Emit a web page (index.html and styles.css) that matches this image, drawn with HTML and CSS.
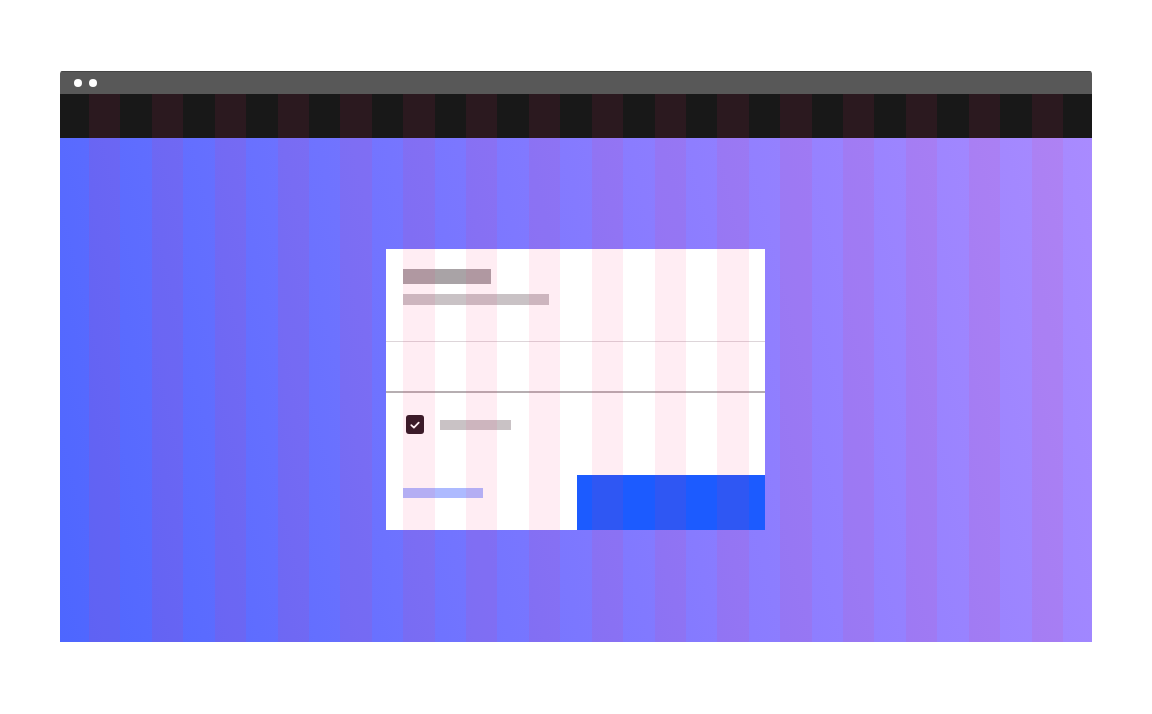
FILE: index.html
```html
<!DOCTYPE html>
<html lang="en">
<head>
<meta charset="utf-8">
<title>Layout grid</title>
<link rel="stylesheet" href="styles.css">
</head>
<body>
<div class="window">
  <div class="titlebar">
    <span class="dot"></span>
    <span class="dot"></span>
  </div>
  <div class="header"></div>
  <div class="content">
    <div class="card">
      <div class="card-head">
        <div class="bar title-bar"></div>
        <div class="bar sub-bar"></div>
      </div>
      <div class="divider-light"></div>
      <div class="field"></div>
      <div class="divider-dark"></div>
      <div class="check-row">
        <span class="checkbox">
          <svg width="12" height="12" viewBox="0 0 12 12"><path d="M2.3 6.2 L4.9 8.6 L9.7 3.6" fill="none" stroke="#fff" stroke-width="1.8" stroke-linecap="round" stroke-linejoin="round"/></svg>
        </span>
        <div class="bar label-bar"></div>
      </div>
      <div class="footer">
        <div class="footer-left"><div class="bar link-bar"></div></div>
        <div class="button"></div>
      </div>
    </div>
  </div>
  <div class="overlay">
    <span></span><span></span><span></span><span></span>
    <span></span><span></span><span></span><span></span>
    <span></span><span></span><span></span><span></span>
    <span></span><span></span><span></span><span></span>
  </div>
</div>
</body>
</html>
```

FILE: styles.css
```css
html, body {
  margin: 0;
  padding: 0;
  background: #ffffff;
  font-family: "Liberation Sans", Arial, sans-serif;
}
body {
  padding-top: 71px;
  padding-left: 60px;
  height: 714px;
  box-sizing: border-box;
}
.window {
  position: relative;
  width: 1032px;
  height: 571px;
  display: flex;
  flex-direction: column;
  border-radius: 3px 3px 0 0;
  overflow: hidden;
}
.titlebar {
  height: 23px;
  background: #585858;
  display: flex;
  align-items: center;
  gap: 7px;
  padding-left: 14px;
  box-shadow: inset 0 1px 0 #454545;
  flex: none;
}
.dot {
  width: 8px;
  height: 8px;
  border-radius: 50%;
  background: #ffffff;
}
.header {
  height: 44px;
  background: #181818;
  flex: none;
}
.content {
  flex: 1;
  background: linear-gradient(76deg, #4d66ff 0%, #6c72ff 30%, #8a7cff 60%, #a98bff 100%);
  display: flex;
  align-items: center;
  justify-content: center;
}
.card {
  width: 379px;
  height: 281px;
  background: #ffffff;
  display: flex;
  flex-direction: column;
  margin-top: -1px;
  margin-left: -1px;
}
.card-head {
  height: 92px;
  padding: 20px 0 0 17px;
  box-sizing: border-box;
  display: flex;
  flex-direction: column;
  gap: 10px;
}
.bar {
  flex: none;
}
.title-bar {
  width: 88px;
  height: 15px;
  background: #a9a3a6;
}
.sub-bar {
  width: 146px;
  height: 11px;
  background: #c9c2c5;
}
.divider-light {
  height: 1px;
  background: #ddd5d9;
}
.field {
  height: 49px;
}
.divider-dark {
  height: 2px;
  background: #b6aeb1;
}
.check-row {
  display: flex;
  align-items: center;
  gap: 16px;
  padding: 22px 0 0 20px;
}
.checkbox {
  width: 18px;
  height: 19px;
  border-radius: 3px;
  background: #2a1a22;
  display: flex;
  align-items: center;
  justify-content: center;
}
.label-bar {
  width: 71px;
  height: 10px;
  background: #c9c2c5;
}
.footer {
  margin-top: auto;
  height: 55px;
  display: flex;
}
.footer-left {
  flex: 1;
  padding: 13px 0 0 17px;
}
.link-bar {
  width: 80px;
  height: 10px;
  background: #adbaff;
}
.button {
  width: 188px;
  background: #1c5bff;
}
.overlay {
  position: absolute;
  top: 23px;
  left: 0;
  right: 0;
  bottom: 0;
  display: grid;
  grid-template-columns: repeat(16, 1fr);
  column-gap: 31.42px;
  padding: 0 29px;
  pointer-events: none;
}
.overlay span {
  background: rgba(255, 46, 121, 0.087);
}
```
